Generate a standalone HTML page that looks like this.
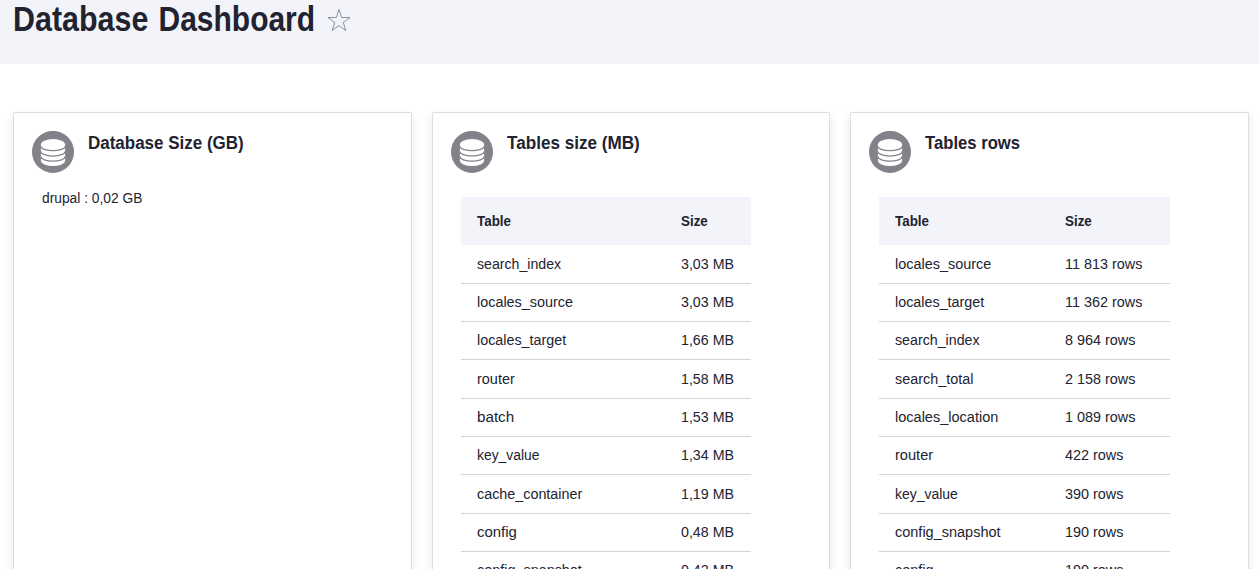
<!DOCTYPE html>
<html lang="en">
<head>
<meta charset="utf-8">
<title>Database Dashboard</title>
<style>
html,body{margin:0;padding:0;}
body{width:1259px;height:569px;overflow:hidden;background:#fff;color:#222330;font-family:"Liberation Sans",sans-serif;position:relative;}
.band{position:absolute;left:0;top:0;width:1259px;height:64px;background:#f3f4f9;}
h1{position:absolute;left:12.7px;top:-1px;margin:0;font-size:34.5px;line-height:40px;font-weight:bold;white-space:nowrap;color:#222330;word-spacing:2px;transform-origin:0 0;transform:scaleX(.882);}
h1 span{display:inline-block;transform-origin:0 50%;transform:scaleX(.985);}
.star{position:absolute;left:327px;top:8px;width:24px;height:24px;}
.card{position:absolute;top:112px;height:520px;box-sizing:border-box;background:#fff;border:1px solid rgba(212,212,218,.8);border-radius:2px;box-shadow:0 4px 10px rgba(0,0,0,.1);}
.c1{left:13px;width:399px;}
.c2{left:432px;width:398px;}
.c3{left:850px;width:399px;}
.c2 h2{transform:scaleX(.950);}
.c3 h2{transform:scaleX(.926);}
.ico{position:absolute;left:18px;top:18px;width:42px;height:42px;}
h2{position:absolute;left:74px;top:19px;margin:0;font-size:18px;line-height:22px;font-weight:bold;white-space:nowrap;color:#222330;transform-origin:0 0;transform:scaleX(.943);}
.txt{position:absolute;left:28px;top:75px;font-size:15.5px;line-height:20px;white-space:nowrap;transform-origin:0 0;transform:scaleX(.89);}
table{position:absolute;left:28px;top:84px;border-collapse:collapse;font-size:15.5px;table-layout:fixed;}
tr.h{background:#f3f4f9;}
th{text-align:left;font-weight:bold;font-size:15px;height:48px;padding:0 0 1px 16px;box-sizing:border-box;}
th span{display:inline-block;transform-origin:0 50%;transform:scaleX(.893);}
td span{display:inline-block;transform-origin:0 50%;transform:scaleX(.929);}
.c2 td+td span{transform:scaleX(.918);}
.c3 td+td span{transform:scaleX(.929);}
td{height:38.33px;padding:0 0 1px 16px;box-sizing:border-box;white-space:nowrap;}
tr.r{border-bottom:1px solid #d3d4d9;}
tr.h+tr.r td{padding:1px 0 0 16px;}
</style>
</head>
<body>
<div class="band"></div>
<h1>Database <span>Dashboard</span></h1>
<svg class="star" viewBox="0 0 24 24"><path d="M12.00 1.50 L14.62 9.50 L23.03 9.52 L16.23 14.48 L18.82 22.48 L12.00 17.55 L5.18 22.48 L7.77 14.48 L0.97 9.52 L9.38 9.50 Z" fill="none" stroke="#8e919c" stroke-width="1" stroke-linejoin="miter"/></svg>

<div class="card c1">
  <svg class="ico" viewBox="0 0 42 42"><circle cx="21" cy="20.9" r="21" fill="#828388"/><path d="M8.9 13.55 A12.1 5.55 0 0 1 33.1 13.55 L33.1 29.55 A12.1 5.55 0 0 1 8.9 29.55 Z" fill="#fff"/><path d="M8.9 15.15 A12.1 4.6 0 0 0 33.1 15.15 M8.9 20.45 A12.1 4.6 0 0 0 33.1 20.45 M8.9 25.55 A12.1 4.6 0 0 0 33.1 25.55" fill="none" stroke="#828388" stroke-width="1.25"/></svg>
  <h2>Database Size (GB)</h2>
  <div class="txt">drupal : 0,02 GB</div>
</div>

<div class="card c2">
  <svg class="ico" viewBox="0 0 42 42"><circle cx="21" cy="20.9" r="21" fill="#828388"/><path d="M8.9 13.55 A12.1 5.55 0 0 1 33.1 13.55 L33.1 29.55 A12.1 5.55 0 0 1 8.9 29.55 Z" fill="#fff"/><path d="M8.9 15.15 A12.1 4.6 0 0 0 33.1 15.15 M8.9 20.45 A12.1 4.6 0 0 0 33.1 20.45 M8.9 25.55 A12.1 4.6 0 0 0 33.1 25.55" fill="none" stroke="#828388" stroke-width="1.25"/></svg>
  <h2>Tables size (MB)</h2>
  <table style="width:290px">
    <colgroup><col style="width:204px"><col style="width:86px"></colgroup>
    <tr class="h"><th><span>Table</span></th><th><span>Size</span></th></tr>
    <tr class="r"><td><span style="transform:scaleX(0.912)">search_index</span></td><td><span>3,03 MB</span></td></tr>
    <tr class="r"><td><span style="transform:scaleX(0.929)">locales_source</span></td><td><span>3,03 MB</span></td></tr>
    <tr class="r"><td><span style="transform:scaleX(0.924)">locales_target</span></td><td><span>1,66 MB</span></td></tr>
    <tr class="r"><td><span style="transform:scaleX(0.934)">router</span></td><td><span>1,58 MB</span></td></tr>
    <tr class="r"><td><span style="transform:scaleX(0.980)">batch</span></td><td><span>1,53 MB</span></td></tr>
    <tr class="r"><td><span style="transform:scaleX(0.895)">key_value</span></td><td><span>1,34 MB</span></td></tr>
    <tr class="r"><td><span style="transform:scaleX(0.925)">cache_container</span></td><td><span>1,19 MB</span></td></tr>
    <tr class="r"><td><span style="transform:scaleX(0.964)">config</span></td><td><span>0,48 MB</span></td></tr>
    <tr class="r"><td><span>config_snapshot</span></td><td><span>0,42 MB</span></td></tr>
    <tr class="r"><td><span>menu_tree</span></td><td><span>0,27 MB</span></td></tr>
  </table>
</div>

<div class="card c3">
  <svg class="ico" viewBox="0 0 42 42"><circle cx="21" cy="20.9" r="21" fill="#828388"/><path d="M8.9 13.55 A12.1 5.55 0 0 1 33.1 13.55 L33.1 29.55 A12.1 5.55 0 0 1 8.9 29.55 Z" fill="#fff"/><path d="M8.9 15.15 A12.1 4.6 0 0 0 33.1 15.15 M8.9 20.45 A12.1 4.6 0 0 0 33.1 20.45 M8.9 25.55 A12.1 4.6 0 0 0 33.1 25.55" fill="none" stroke="#828388" stroke-width="1.25"/></svg>
  <h2>Tables rows</h2>
  <table style="width:291px">
    <colgroup><col style="width:170px"><col style="width:121px"></colgroup>
    <tr class="h"><th><span>Table</span></th><th><span>Size</span></th></tr>
    <tr class="r"><td><span style="transform:scaleX(0.932)">locales_source</span></td><td><span>11 813 rows</span></td></tr>
    <tr class="r"><td><span style="transform:scaleX(0.925)">locales_target</span></td><td><span>11 362 rows</span></td></tr>
    <tr class="r"><td><span style="transform:scaleX(0.917)">search_index</span></td><td><span>8 964 rows</span></td></tr>
    <tr class="r"><td><span style="transform:scaleX(0.930)">search_total</span></td><td><span>2 158 rows</span></td></tr>
    <tr class="r"><td><span style="transform:scaleX(0.937)">locales_location</span></td><td><span>1 089 rows</span></td></tr>
    <tr class="r"><td><span style="transform:scaleX(0.942)">router</span></td><td><span>422 rows</span></td></tr>
    <tr class="r"><td><span style="transform:scaleX(0.901)">key_value</span></td><td><span>390 rows</span></td></tr>
    <tr class="r"><td><span style="transform:scaleX(0.935)">config_snapshot</span></td><td><span>190 rows</span></td></tr>
    <tr class="r"><td><span>config</span></td><td><span>190 rows</span></td></tr>
    <tr class="r"><td><span>menu_tree</span></td><td><span>80 rows</span></td></tr>
  </table>
</div>
</body>
</html>
